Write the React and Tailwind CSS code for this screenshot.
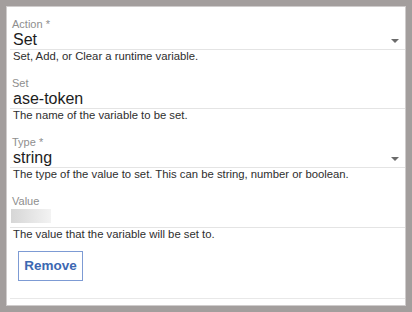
import React from 'react';

const Caret = () => (
    <span className="absolute right-[6px] top-[8px] w-0 h-0 border-l-[4px] border-r-[4px] border-t-[4px] border-l-transparent border-r-transparent border-t-[#6b6b6b]"></span>
);

const Field = ({ label, value, helper, select, className = '' }) => (
    <div className={className}>
        <div className="pl-[2px] text-[11px] leading-[13px] text-[#8e8e8e]">{label}</div>
        <div className="relative pl-[3px] h-[19px] text-[16px] leading-[18px] text-[#1c1c1c] border-b border-[#e4e4e4]">
            {value}
            {select && <Caret />}
        </div>
        <div className="pl-[3px] text-[11.3px] leading-[13px] text-[#2e2e2e]">{helper}</div>
    </div>
);

export default function App() {
    return (
        <div className="w-[412px] h-[312px] bg-[#a39e9d] pt-[6px] pl-[6px] pr-[6px] pb-[6px] flex font-['Liberation_Sans',Arial,sans-serif]">
            <div className="flex-1 bg-white border border-[#cfcccc] flex flex-col">
                <div className="pl-[3px] pt-[11px]">
                    <Field label="Action *" value="Set" helper="Set, Add, or Clear a runtime variable." select />
                    <Field className="mt-[14px]" label="Set" value="ase-token" helper="The name of the variable to be set." />
                    <Field className="mt-[14px]" label="Type *" value="string" helper="The type of the value to set. This can be string, number or boolean." select />
                    <div className="mt-[14px]">
                        <div className="pl-[2px] text-[11px] leading-[13px] text-[#8e8e8e]">Value</div>
                        <div className="h-[20px] border-b border-[#e4e4e4] pt-[1px] pl-[1px]">
                            <div className="w-[40px] h-[14px] bg-gradient-to-r from-[#d6d6d6] to-[#f3f3f3]"></div>
                        </div>
                        <div className="pl-[3px] text-[11.3px] leading-[13px] text-[#2e2e2e]">The value that the variable will be set to.</div>
                    </div>
                    <div className="pt-[10px] pb-[17px] pl-[8px] border-b border-[#e8e8e8]">
                        <button className="w-[65px] h-[30px] border border-[#7d9bd4] text-[13.5px] font-bold text-[#3c68b2] bg-white">
                            Remove
                        </button>
                    </div>
                </div>
            </div>
        </div>
    );
}
